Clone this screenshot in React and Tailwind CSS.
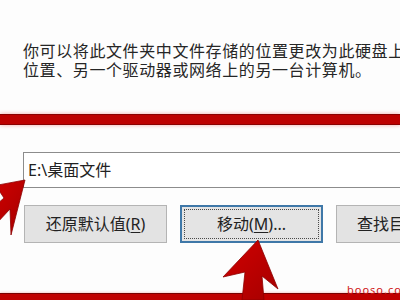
export default function App() {
  const font = { fontFamily: '"Noto Sans", "Noto Sans CJK SC", sans-serif' };

  return (
    <div
      className="relative w-[400px] h-[300px] overflow-hidden bg-[#fdfdfd] text-[#262626]"
      style={font}
    >
      {/* description */}
      <div className="pt-[42px] pl-[23px] text-[16px] leading-[19px] tracking-[0.6px] whitespace-nowrap">
        <p>你可以将此文件夹中文件存储的位置更改为此硬盘上</p>
        <p>位置、另一个驱动器或网络上的另一台计算机。</p>
      </div>

      {/* red marker bar */}
      <div className="mt-[34px] h-[11px] bg-[#bd0000] border-y border-[#8a0000] shadow-[0_0_4px_#f2a0a0]" />

      {/* path box */}
      <div className="mt-[27px] ml-[23px] w-[420px] h-[36px] flex items-center pl-[4px] bg-white border border-[#8c8c8c] text-[16px] text-[#222]">
        E:\桌面文件
      </div>

      {/* buttons */}
      <div className="mt-[17px] ml-[24px] flex gap-[13px] whitespace-nowrap">
        <button className="w-[143px] h-[38px] shrink-0 bg-[#e3e3e3] border border-[#b4b4b4] text-[16px] text-[#222]">
          还原默认值(<span className="underline underline-offset-2">R</span>)
        </button>
        <button className="w-[143px] h-[38px] shrink-0 bg-[#e4e4e4] border-2 border-[#3f78a8] p-[2px] text-[16px] text-[#222]">
          <span className="flex h-full w-full items-center justify-center border border-dotted border-[#4a4a4a]">
            移动(<span className="underline underline-offset-2">M</span>)...
          </span>
        </button>
        <button className="w-[143px] h-[38px] shrink-0 bg-[#e3e3e3] border border-[#b4b4b4] text-[16px] text-[#222] text-left pl-[20px]">
          查找目标(F)
        </button>
      </div>

      {/* bottom red bar */}
      <div className="mt-[50px] h-[7px] bg-[#c00000] border-t border-[#7a0000] shadow-[0_0_3px_#f2a0a0]" />

      {/* watermark */}
      <span className="absolute left-[347px] top-[284px] text-[11px] leading-none tracking-[1px] text-[#d01818]">
        booso.com
      </span>

      {/* annotation arrows */}
      <svg className="absolute left-0 top-0" width="400" height="300" viewBox="0 0 400 300">
        <defs>
          <linearGradient id="ar" x1="0" y1="0" x2="1" y2="1">
            <stop offset="0" stopColor="#d10000" />
            <stop offset="1" stopColor="#a50000" />
          </linearGradient>
        </defs>
        <polygon
          points="25,180 -2,185 0,192 4,198 -10,210 -4,224 10,209 11,235"
          fill="url(#ar)"
          stroke="#8c0000"
          strokeWidth="0.8"
        />
        <polygon
          points="258,240 223,277 245,272 242,300 264,300 262,276 278,289"
          fill="url(#ar)"
          stroke="#8c0000"
          strokeWidth="0.8"
        />
      </svg>
    </div>
  );
}
